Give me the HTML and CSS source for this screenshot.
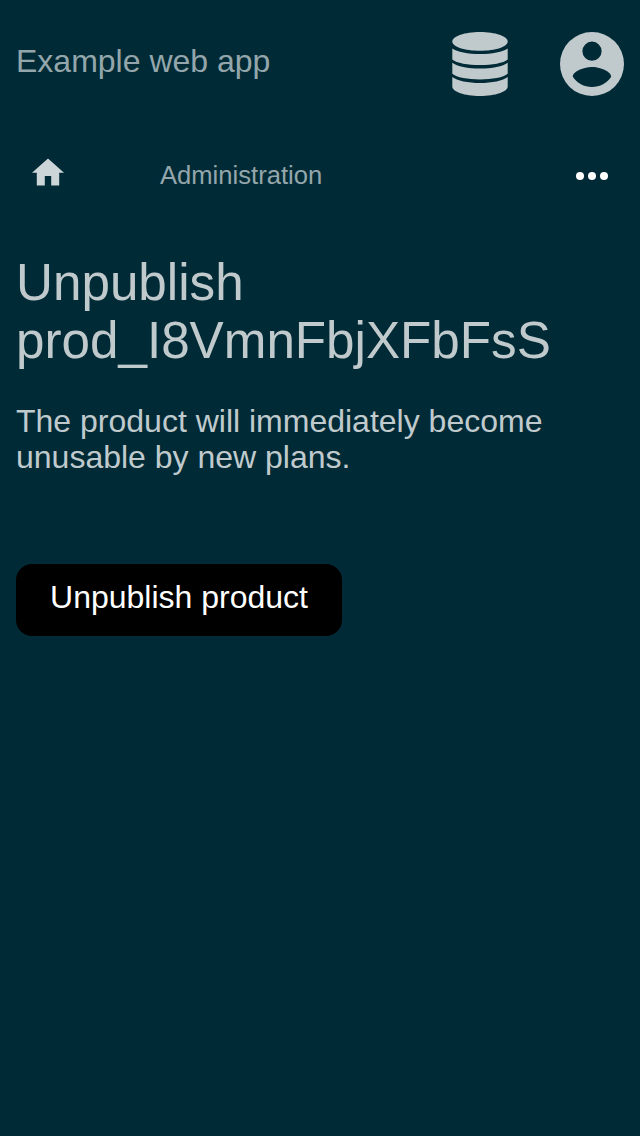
FILE: index.html
```html
<!DOCTYPE html>
<html lang="en">
<head>
<meta charset="utf-8">
<title>Unpublish product</title>
<link rel="stylesheet" href="styles.css">
</head>
<body>
<header class="header">
  <a class="brand">Example web app</a>
  <svg class="header-icon database" viewBox="0 0 56 64"><path d="M.3 9.500C.3 4.200 12.700 0 28 0s27.700 4.200 27.700 9.500S43.300 18.800 28 18.800.3 14.800.3 9.500z"/><path d="M.3 16.500C5 20 16 22 28 22s23-2 27.700-5.500v10.900C51.500 31 40 33 28 33S4.500 31 .3 27.400z"/><path d="M.3 30.700C5 34.400 16 36.600 28 36.600s23-2.200 27.700-5.900v11.100C51.500 45.400 40 47.500 28 47.500S4.500 45.400.3 41.800z"/><path d="M.3 45C5 48.800 16 51 28 51s23-2.200 27.700-6v9.500C55.700 59.800 43.300 64 28 64S.3 59.800.3 54.500z"/></svg>
  <svg class="header-icon account" viewBox="0 0 64 64"><path fill-rule="evenodd" d="M32 0a32 32 0 1 0 0 64 32 32 0 0 0 0-64zm0 9.600a9.600 9.600 0 1 1 0 19.200 9.600 9.600 0 0 1 0-19.200zm0 45.440c-8 0-15.070-4.100-19.200-10.300.1-6.370 12.800-9.860 19.200-9.860 6.370 0 19.100 3.490 19.200 9.860-4.130 6.200-11.200 10.300-19.200 10.300z"/></svg>
</header>
<nav class="nav">
  <svg class="home" viewBox="0 0 32 28"><path d="M12.800 27.600V18h6.400v9.600h8V14.700H32L16 .4 0 14.700h4.800v12.900z"/></svg>
  <a class="section">Administration</a>
  <svg class="more" viewBox="0 0 32 8"><circle cx="4" cy="4" r="4"/><circle cx="16" cy="4" r="4"/><circle cx="28" cy="4" r="4"/></svg>
</nav>
<main class="content">
  <h1 class="title">Unpublish prod_I8VmnFbjXFbFsS</h1>
  <p class="message">The product will immediately become unusable by new plans.</p>
  <button class="submit">Unpublish product</button>
</main>
</body>
</html>
```
FILE: styles.css
```css
* { box-sizing: border-box; }
body {
  margin: 0;
  min-height: 1136px;
  background: #002b36;
  color: #c0cacd;
  font-family: "Liberation Sans", Arial, sans-serif;
}
.header {
  display: flex;
  align-items: center;
  height: 128px;
  padding: 0 16px;
}
.brand {
  flex: 1;
  margin-top: -6px;
  color: #94a6ab;
  font-size: 32px;
  line-height: 36px;
}
.header-icon { height: 64px; fill: #c0cacd; }
.database { width: 56px; margin-right: 52px; }
.account { width: 64px; }
.nav {
  display: flex;
  align-items: center;
  height: 96px;
  padding: 0 32px;
}
.home { width: 32px; height: 28px; margin: -8px 96px 0 0; fill: #ccd5d7; }
.section { flex: 1; margin-top: -2px; color: #94a6ab; font-size: 25.6px; line-height: 30px; }
.more { width: 32px; height: 8px; fill: #fff; }
.content { padding: 30px 16px; }
.title {
  margin: 0 0 33px;
  font-size: 51.2px;
  font-weight: 400;
  line-height: 58px;
}
.message { margin: 0 0 89px; font-size: 32px; line-height: 36px; }
.submit {
  display: block;
  width: 326px;
  height: 72px;
  padding: 0 0 6px;
  border: 0;
  border-radius: 16px;
  background: #000;
  color: #fff;
  font: 32px/36px "Liberation Sans", Arial, sans-serif;
}
```
